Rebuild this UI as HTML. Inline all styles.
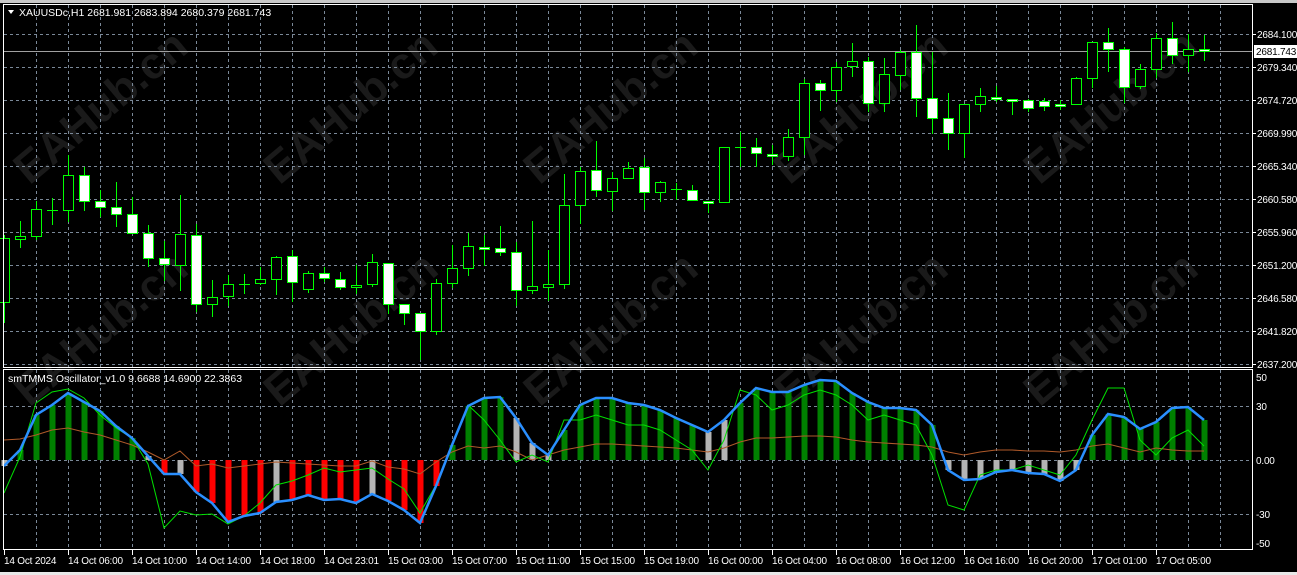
<!DOCTYPE html>
<html><head><meta charset="utf-8"><style>
html,body{margin:0;padding:0;background:#000;width:1297px;height:575px;overflow:hidden}
svg{display:block}
text{font-family:"Liberation Sans",sans-serif;font-size:10.5px;fill:#fff}
.ax{font-size:10px;letter-spacing:-0.2px}
</style></head><body>
<svg id="s" width="1297" height="575" xmlns="http://www.w3.org/2000/svg" style="overflow:hidden"></svg>
<script>
const s=document.getElementById('s');let h='';
h+='<rect x="0" y="0" width="1297" height="575" fill="#000"/>';
h+='<rect x="0" y="0" width="1297" height="3" fill="#c8c8c8"/>';
h+='<rect x="0" y="572" width="1297" height="3" fill="#e8e8e8"/>';
// watermarks (clipped to chart)
h+='<svg x="0" y="0" width="1252" height="550">';
const wm=[[360,118],[620,118],[870,118],[1120,118],[110,118],[110,340],[360,340],[620,340],[870,340],[1120,340]];
wm.forEach(p=>{h+=`<text x="${p[0]}" y="${p[1]}" transform="rotate(-40 ${p[0]} ${p[1]})" text-anchor="middle" style="font-size:44px;fill:#1a1a1a;font-weight:bold">EAHub.cn</text>`});
h+='</svg>';
// grids
const gc='#7a8898';
for(let x=36;x<1252;x+=32){h+=`<line x1="${x+.5}" y1="5" x2="${x+.5}" y2="367" stroke="${gc}" stroke-dasharray="3,3"/>`;h+=`<line x1="${x+.5}" y1="370" x2="${x+.5}" y2="549" stroke="${gc}" stroke-dasharray="3,3"/>`;}
const pl=[[34,'2684.100'],[67,'2679.340'],[100,'2674.720'],[133,'2669.990'],[166,'2665.340'],[199,'2660.580'],[232,'2655.960'],[265,'2651.200'],[298,'2646.580'],[331,'2641.820'],[364,'2637.200']];
pl.forEach(p=>{h+=`<line x1="4" y1="${p[0]+.5}" x2="1252" y2="${p[0]+.5}" stroke="${gc}" stroke-dasharray="3,3"/>`;h+=`<line x1="1252" y1="${p[0]+.5}" x2="1256" y2="${p[0]+.5}" stroke="#fff"/>`;h+=`<text class="ax" x="1257" y="${p[0]+4}">${p[1]}</text>`});
[406,460,514].forEach(y=>{h+=`<line x1="4" y1="${y+.5}" x2="1252" y2="${y+.5}" stroke="${gc}" stroke-dasharray="3,3"/>`});
[[377,'50'],[406,'30'],[460,'0.00'],[514,'-30'],[543,'-50']].forEach(p=>{h+=`<text class="ax" x="1256" y="${p[0]+4}">${p[1]}</text>`});
h+='<line x1="4" y1="51.5" x2="1252" y2="51.5" stroke="#a0a0a0"/>';
const C=[[238,302,235,323,0],[236,239,221,248,0],[209,236,201,240,0],[210,210,198,225,0],[175,210,155,222,0],[175,201,167,211,1],[201,207,190,217,1],[207,214,182,227,1],[214,233,197,233,1],[233,258,225,267,1],[258,264,241,281,1],[234,265,195,291,0],[235,304,224,312,1],[297,304,280,317,0],[284,296,275,306,0],[284,284,274,294,0],[279,283,267,285,0],[257,279,256,295,0],[256,282,250,302,1],[273,289,271,293,0],[273,278,267,282,1],[279,287,272,290,1],[285,287,265,294,0],[262,284,254,287,0],[263,304,263,314,1],[304,313,304,325,1],[313,331,313,360,1],[283,331,279,335,0],[268,283,245,288,0],[246,268,233,276,0],[247,249,235,266,1],[248,252,226,256,1],[252,290,242,306,1],[286,290,221,294,0],[284,287,250,301,0],[205,284,174,289,0],[171,205,167,224,0],[170,190,141,197,1],[178,191,172,211,0],[168,178,162,179,0],[167,192,158,210,1],[182,192,181,202,0],[189,189,183,200,0],[190,200,185,200,1],[201,203,201,213,1],[147,202,147,203,0],[147,147,132,167,0],[147,153,138,167,1],[154,156,145,165,1],[137,156,129,161,0],[83,137,79,155,0],[83,90,80,111,1],[67,90,62,102,0],[61,66,43,77,0],[61,103,57,112,1],[74,103,58,112,0],[52,75,50,90,0],[52,98,25,117,1],[98,118,52,134,1],[118,133,93,150,1],[104,133,104,158,0],[96,104,88,112,0],[97,99,86,102,1],[99,101,99,115,1],[100,108,99,112,1],[101,106,98,111,1],[104,106,100,110,1],[78,104,77,104,0],[42,78,42,88,0],[42,49,28,72,1],[49,87,47,103,1],[69,86,64,89,0],[38,69,33,78,0],[38,55,22,64,1],[49,55,34,72,0],[49,51,35,61,1]];
h+='<svg x="0" y="0" width="1252" height="367"><g>';
C.forEach((c,k)=>{const x=4+16*k;h+=`<line x1="${x+.5}" y1="${c[2]}" x2="${x+.5}" y2="${c[3]}" stroke="#00ff00"/>`;
 if(c[1]-c[0]<1){h+=`<line x1="${x-5}" y1="${c[0]+.5}" x2="${x+6}" y2="${c[0]+.5}" stroke="#00ff00"/>`}
 else h+=`<rect x="${x-4.5}" y="${c[0]+.5}" width="10" height="${c[1]-c[0]}" fill="${c[4]?'#fff':'#000'}" stroke="#00ff00"/>`;});
h+='</g></svg>';
const Hv=[466,450,415,405,393,402,411,426,438,456,474,474,492,503,522,516,513,502,500,495,500,499,503,494,501,510,523,486,445,406,398,397,418,443,455,430,405,398,398,403,405,410,418,425,432,420,403,388,392,392,385,380,381,393,402,408,408,410,425,470,480,479,472,470,473,474,481,470,435,414,417,429,422,408,407,420];
const gray=new Set([0,9,11,17,23,32,33,34,44,45,59,60,61,62,63,64,65,66,67]);
const G=[493,457,403,392,389,398,415,428,438,464,528,511,515,514,524,516,503,485,481,475,468,472,470,468,479,489,513,485,445,405,420,440,462,455,462,420,420,415,420,425,425,430,440,450,470,440,390,395,410,405,395,390,395,405,420,415,420,425,455,505,510,475,470,470,465,470,475,455,420,388,388,440,455,438,430,446];
const B=[440,439,435,430,428,432,435,440,445,452,460,451,466,464,468,466,464,462,463,464,465,466,466,461,467,469,474,462,452,446,448,446,452,460,455,450,447,444,444,445,446,447,448,450,452,448,442,438,438,437,436,436,437,440,442,443,444,445,447,452,455,452,450,450,451,451,452,450,446,444,448,452,448,450,451,451];
Hv.forEach((v,k)=>{const x=4+16*k;const col=gray.has(k)?'#b4b4b4':(v<460?'#008000':'#ff0000');const y1=Math.min(v,460),y2=Math.max(v,460);h+=`<rect x="${x-2.5}" y="${y1}" width="6" height="${Math.max(y2-y1,2)}" fill="${col}"/>`});
const pts=a=>a.map((v,k)=>`${4+16*k},${v}`).join(' ');
h+=`<polyline points="${pts(B)}" fill="none" stroke="#b05a2a" stroke-width="1"/>`;
h+=`<polyline points="${pts(G)}" fill="none" stroke="#00e000" stroke-width="1"/>`;
h+=`<polyline points="${pts(Hv)}" fill="none" stroke="#2a8fff" stroke-width="2.5"/>`;
h+='<rect x="3.5" y="4.5" width="1249" height="363" fill="none" stroke="#fff"/>';
h+='<rect x="3.5" y="369.5" width="1249" height="180" fill="none" stroke="#fff"/>';
h+='<rect x="1254" y="45" width="43" height="13" fill="#fff"/><text class="ax" x="1256" y="55" style="fill:#000">2681.743</text>';
h+='<path d="M8 10 L14 10 L11 14 Z" fill="#fff"/><text x="19" y="16">XAUUSDc,H1  2681.981 2683.894 2680.379 2681.743</text>';
h+='<text x="8" y="382">smTMMS Oscillator_v1.0 9.6688 14.6900 22.3863</text>';
const T=["14 Oct 2024","14 Oct 06:00","14 Oct 10:00","14 Oct 14:00","14 Oct 18:00","14 Oct 23:01","15 Oct 03:00","15 Oct 07:00","15 Oct 11:00","15 Oct 15:00","15 Oct 19:00","16 Oct 00:00","16 Oct 04:00","16 Oct 08:00","16 Oct 12:00","16 Oct 16:00","16 Oct 20:00","17 Oct 01:00","17 Oct 05:00"];
T.forEach((t,i)=>{const x=4+64*i;h+=`<line x1="${x+.5}" y1="550" x2="${x+.5}" y2="555" stroke="#fff"/><text class="ax" x="${x}" y="564">${t}</text>`});
s.innerHTML=h;
</script>
</body></html>
